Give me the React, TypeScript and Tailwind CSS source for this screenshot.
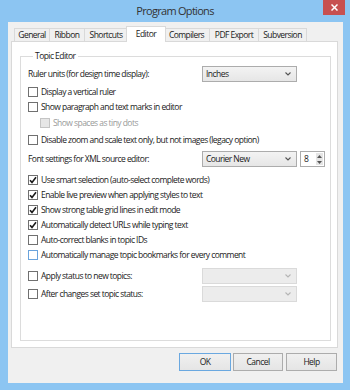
import clsx from "clsx";

function Check({ checked, disabled, hover }: { checked?: boolean; disabled?: boolean; hover?: boolean }) {
  return (
    <span
      className={clsx(
        "flex h-[10px] w-[10px] shrink-0 items-center justify-center border",
        disabled ? "border-[#c4c4c4] bg-[#e6e6e6]" : hover ? "border-[#6aa3dc] bg-white" : "border-[#707070] bg-white"
      )}
    >
      {checked && (
        <svg width="8" height="8" viewBox="0 0 8 8">
          <path d="M1 4.2 L3 6.4 L7 1.2" fill="none" stroke="#1a1a1a" strokeWidth="1.6" />
        </svg>
      )}
    </span>
  );
}

function CheckRow({ label, checked, disabled, hover, className }: { label: string; checked?: boolean; disabled?: boolean; hover?: boolean; className?: string }) {
  return (
    <div className={clsx("flex h-[15px] items-center gap-[3px]", className)}>
      <Check checked={checked} disabled={disabled} hover={hover} />
      <span className={disabled ? "text-[#9a9a9a]" : ""}>{label}</span>
    </div>
  );
}

function Chevron({ color }: { color: string }) {
  return (
    <svg width="6" height="4" viewBox="0 0 6 4">
      <path d="M0.5 0.5 L3 3 L5.5 0.5" fill="none" stroke={color} strokeWidth="1.1" />
    </svg>
  );
}

function Select({ value, disabled }: { value?: string; disabled?: boolean }) {
  return (
    <div
      className={clsx(
        "flex h-[16px] w-[95px] shrink-0 items-center justify-between border pl-[3px] pr-[5px]",
        disabled ? "border-[#dadada] bg-[#ececec]" : "border-[#acacac] bg-linear-to-b from-[#f3f3f3] to-[#e6e6e6]"
      )}
    >
      <span>{value}</span>
      <Chevron color={disabled ? "#b5b5b5" : "#555555"} />
    </div>
  );
}

const tabs = [
  { name: "General", w: "w-[36px]" },
  { name: "Ribbon", w: "w-[35px]" },
  { name: "Shortcuts", w: "w-[43px]" },
  { name: "Editor", w: "w-[40px]", active: true },
  { name: "Compilers", w: "w-[46px]" },
  { name: "PDF Export", w: "w-[49px]" },
  { name: "Subversion", w: "w-[48px]" },
];

export default function App() {
  return (
    <div className="flex h-[390px] w-[350px] flex-col bg-[#8cc5f2] font-['Segoe_UI','Open_Sans',sans-serif] text-[8.5px] leading-[12px] tracking-[-0.55px] text-[#1a1a1a]">
      <div className="grid h-[22px] shrink-0 grid-cols-[1fr_auto_1fr]">
        <div />
        <span className="self-center text-[11px] leading-[14px] tracking-[-0.7px] text-[#333]">Program Options</span>
        <div className="mr-[5px] flex h-[15px] w-[22px] items-center justify-center justify-self-end bg-[#c75050]">
          <svg width="7" height="7" viewBox="0 0 7 7">
            <path d="M0.5 0.5 L6.5 6.5 M6.5 0.5 L0.5 6.5" stroke="#fff" strokeWidth="1.5" />
          </svg>
        </div>
      </div>

      <div className="mb-[7px] ml-[8px] mr-[7px] flex flex-1 flex-col bg-[#f0f0f0] pl-[3px] pr-[5px] pt-[4px]">
        <div className="ml-[3px] flex h-[15px] items-end">
          {tabs.map((t) =>
            t.active ? (
              <div
                key={t.name}
                className={clsx("relative z-10 -mx-[2px] -mb-px flex h-[16px] items-start justify-center border-x border-t border-[#d9d9d9] bg-white pt-[1px]", t.w)}
              >
                {t.name}
              </div>
            ) : (
              <div
                key={t.name}
                className={clsx("flex h-[13px] items-center justify-center border-r border-t border-[#d9d9d9] bg-[#f0f0f0] first:border-l", t.w)}
              >
                {t.name}
              </div>
            )
          )}
        </div>

        <div className="flex h-[307px] flex-col border border-[#d9d9d9] bg-white">
          <fieldset className="mb-[6px] ml-[8px] mr-[6px] mt-[8px] flex-1 border border-[#dcdcdc] pl-[7px]">
            <legend className="ml-[5px] px-[2px] leading-[12px]">Topic Editor</legend>

            <div className="mt-[4px] flex h-[16px] items-center">
              <span className="w-[174px]">Ruler units (for design time display):</span>
              <Select value="Inches" />
            </div>
            <CheckRow className="mt-[2px]" label="Display a vertical ruler" />
            <CheckRow label="Show paragraph and text marks in editor" />
            <CheckRow className="mt-[1px] pl-[12px]" label="Show spaces as tiny dots" disabled />
            <CheckRow className="mt-[2px]" label="Disable zoom and scale text only, but not images (legacy option)" />

            <div className="mt-[4px] flex h-[16px] items-center">
              <span className="w-[174px]">Font settings for XML source editor:</span>
              <Select value="Courier New" />
              <div className="ml-[3px] flex h-[16px] w-[25px] items-center justify-between border border-[#acacac] bg-white pl-[3px] pr-[1px]">
                <span>8</span>
                <div className="flex h-[12px] w-[7px] flex-col items-center justify-around bg-[#e5e5e5]">
                  <svg width="5" height="3" viewBox="0 0 5 3">
                    <path d="M0 3 L2.5 0 L5 3 Z" fill="#555" />
                  </svg>
                  <svg width="5" height="3" viewBox="0 0 5 3">
                    <path d="M0 0 L2.5 3 L5 0 Z" fill="#555" />
                  </svg>
                </div>
              </div>
            </div>

            <CheckRow className="mt-[5px]" label="Use smart selection (auto-select complete words)" checked />
            <CheckRow label="Enable live preview when applying styles to text" checked />
            <CheckRow label="Show strong table grid lines in edit mode" checked />
            <CheckRow label="Automatically detect URLs while typing text" checked />
            <CheckRow label="Auto-correct blanks in topic IDs" />
            <CheckRow label="Automatically manage topic bookmarks for every comment" hover />

            <div className="mt-[6px] flex h-[16px] items-center">
              <div className="flex w-[174px] items-center gap-[3px]">
                <Check />
                <span>Apply status to new topics:</span>
              </div>
              <Select disabled />
            </div>
            <div className="mt-[2px] flex h-[16px] items-center">
              <div className="flex w-[174px] items-center gap-[3px]">
                <Check />
                <span>After changes set topic status:</span>
              </div>
              <Select disabled />
            </div>
          </fieldset>
        </div>

        <div className="mt-[5px] flex justify-end pr-[1px]">
          <button className="flex h-[18px] w-[52px] items-center justify-center border border-[#6aa8e0] bg-linear-to-b from-[#f0f0f0] to-[#e5e5e5]">OK</button>
          <button className="ml-[2px] flex h-[18px] w-[50px] items-center justify-center border border-[#acacac] bg-linear-to-b from-[#f0f0f0] to-[#e5e5e5]">Cancel</button>
          <button className="ml-[3px] flex h-[18px] w-[51px] items-center justify-center border border-[#acacac] bg-linear-to-b from-[#f0f0f0] to-[#e5e5e5]">Help</button>
        </div>
      </div>
    </div>
  );
}
